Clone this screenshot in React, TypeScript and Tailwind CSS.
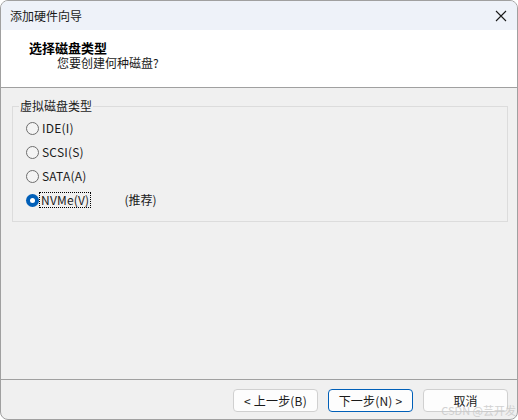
import React from "react";

const font = { fontFamily: '"Noto Sans CJK SC", "Microsoft YaHei UI", sans-serif' };

function Radio({ label, checked, focus, extra }: { label: string; checked?: boolean; focus?: boolean; extra?: string }) {
  return (
    <div className="flex items-center h-[24px]">
      {checked ? (
        <span className="w-[13px] h-[13px] rounded-full bg-[#005fb8] flex items-center justify-center shrink-0">
          <span className="w-[5px] h-[5px] rounded-full bg-white" />
        </span>
      ) : (
        <span className="w-[13px] h-[13px] rounded-full border border-[#6e6e6e] bg-[#f4f4f4] shrink-0" />
      )}
      <span
        className={
          focus
            ? "ml-[1px] px-[1px] outline outline-1 outline-dotted outline-black leading-[14px] text-[12px] text-[#1a1a1a] tracking-[0.2px]"
            : "ml-[3px] leading-[14px] text-[12px] text-[#1a1a1a] tracking-[0.2px]"
        }
      >
        {label}
      </span>
      {extra && <span className="ml-[34px] text-[12px] leading-[14px] text-[#1a1a1a]">{extra}</span>}
    </div>
  );
}

export default function App() {
  return (
    <div className="w-[518px] h-[420px] bg-white relative" style={font}>
      <div className="w-[518px] h-[420px] border border-[#a0a0a0] rounded-[8px] overflow-hidden flex flex-col bg-[#f0f0f0]">
        {/* title bar */}
        <div className="h-[29px] bg-[#eef2f9] flex items-center justify-between pl-[9px] pr-[10px] shrink-0">
          <span className="text-[12px] text-[#1a1a1a] leading-[16px]">添加硬件向导</span>
          <svg width="12" height="12" viewBox="0 0 12 12">
            <path d="M1 1 L11 11 M11 1 L1 11" stroke="#1a1a1a" strokeWidth="1.1" fill="none" />
          </svg>
        </div>
        {/* header */}
        <div className="h-[58px] bg-white border-b border-[#a0a0a0] shrink-0 pt-[10px]">
          <div className="pl-[28px] text-[13px] font-bold leading-[15px] text-black">选择磁盘类型</div>
          <div className="pl-[56px] text-[12px] leading-[15px] text-[#1a1a1a]">您要创建何种磁盘?</div>
        </div>
        {/* body */}
        <div className="flex-1">
          <div className="mt-[18px] ml-[11px] w-[496px] h-[116px] border border-[#dcdcdc] relative pt-[9px] pl-[13px]">
            <span className="absolute top-[-9px] left-[6px] px-[1px] bg-[#f0f0f0] text-[12px] leading-[16px] text-[#1a1a1a]">
              虚拟磁盘类型
            </span>
            <Radio label="IDE(I)" />
            <Radio label="SCSI(S)" />
            <Radio label="SATA(A)" />
            <Radio label="NVMe(V)" checked focus extra="(推荐)" />
          </div>
        </div>
        {/* footer */}
        <div className="h-[40px] border-t border-[#a0a0a0] flex justify-end items-start pt-[9px] pr-[9px] gap-[10px] shrink-0">
          <button className="w-[85px] h-[23px] rounded-[4px] border border-[#d0d0d0] bg-[#fdfdfd] text-[12px] text-[#1a1a1a] leading-[14px] tracking-[0.2px]">
            &lt; 上一步(B)
          </button>
          <button className="w-[85px] h-[23px] rounded-[4px] border border-[#005fb8] bg-[#fdfdfd] text-[12px] text-[#1a1a1a] leading-[14px] tracking-[0.2px]">
            下一步(N) &gt;
          </button>
          <button className="w-[85px] h-[23px] rounded-[4px] border border-[#d0d0d0] bg-[#fdfdfd] text-[12px] text-[#1a1a1a] leading-[14px]">
            取消
          </button>
        </div>
      </div>
      <span className="absolute right-[2px] bottom-[3px] text-[11px] leading-[14px] text-[#c8c8c8] opacity-80 pointer-events-none">
        CSDN @芸开发
      </span>
    </div>
  );
}
